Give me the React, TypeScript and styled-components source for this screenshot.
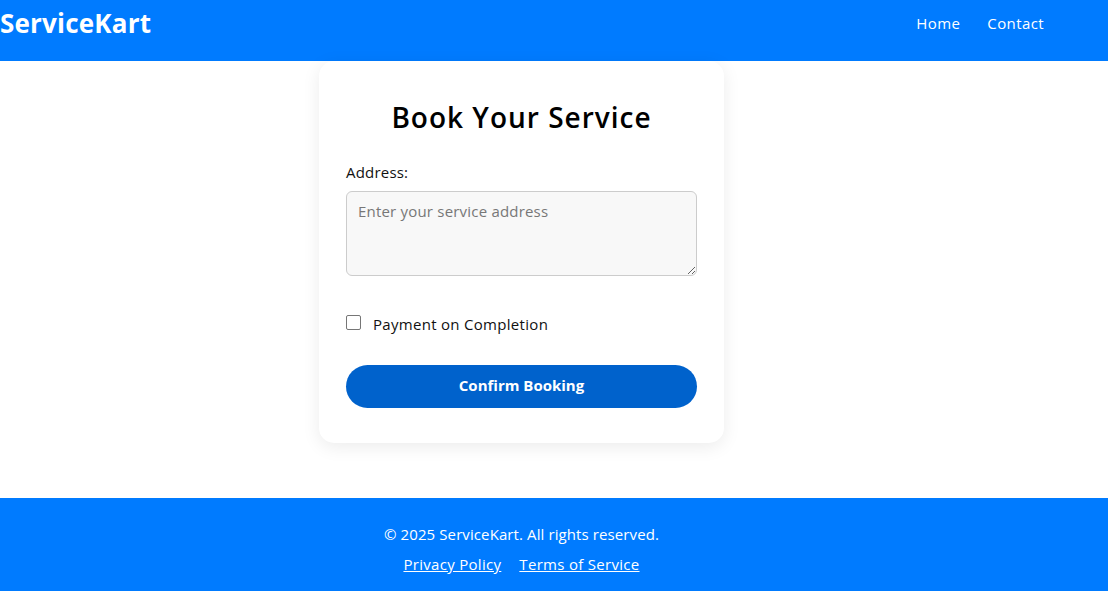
import React from "react";
import styled, { createGlobalStyle } from "styled-components";

const Global = createGlobalStyle`
  * { box-sizing: border-box; }
  body {
    margin: 0;
    font-family: "Open Sans", "Noto Sans", sans-serif;
    background: #ffffff;
    color: #111;
  }
`;

const Page = styled.div`
  display: flex;
  flex-direction: column;
  min-height: 591px;
`;

const Header = styled.header`
  height: 61px;
  background: #007bff;
  display: flex;
  align-items: flex-start;
  justify-content: space-between;
  padding: 0 64px 0 0;
`;

const Brand = styled.div`
  color: #fff;
  font-size: 26px;
  font-weight: 700;
  line-height: 30px;
  margin-top: 8px;
  letter-spacing: 0.2px;
`;

const Nav = styled.nav`
  display: flex;
  gap: 27px;
  margin-top: 12px;
`;

const NavLink = styled.a`
  color: #fff;
  font-size: 15px;
  line-height: 22px;
  text-decoration: none;
  letter-spacing: 0.4px;
`;

const Main = styled.main`
  height: 437px;
  display: flex;
  justify-content: center;
  padding-right: 65px;
`;

const Card = styled.section`
  width: 405px;
  height: 382px;
  background: #fff;
  border-radius: 15px;
  box-shadow: 0 4px 18px rgba(0, 0, 0, 0.08);
  padding: 39px 27px 35px;
  display: flex;
  flex-direction: column;
`;

const Title = styled.h2`
  margin: 0 0 27px;
  text-align: center;
  font-size: 28px;
  line-height: 34px;
  font-weight: 600;
  letter-spacing: 1px;
  color: #000;
`;

const Label = styled.label`
  font-size: 15px;
  line-height: 22px;
  color: #111;
  margin-bottom: 8px;
  letter-spacing: 0.2px;
`;

const Area = styled.textarea`
  width: 351px;
  height: 85px;
  border: 1px solid #ccc;
  border-radius: 6px;
  background: #f8f8f8;
  padding: 9px 11px;
  font-family: inherit;
  font-size: 15px;
  line-height: 20px;
  letter-spacing: 0.2px;
  resize: vertical;
  &::placeholder { color: #777; }
`;

const CheckRow = styled.label`
  display: flex;
  align-items: center;
  gap: 12px;
  margin-top: 37px;
  height: 22px;
  font-size: 15px;
  letter-spacing: 0.3px;
  color: #111;
`;

const Check = styled.input`
  width: 15px;
  height: 15px;
  margin: -3px 0 0 0;
  appearance: none;
  border: 1px solid #767676;
  border-radius: 2px;
  background: #fff;
`;

const Button = styled.button`
  margin-top: 30px;
  width: 351px;
  height: 43px;
  border: none;
  border-radius: 22px;
  background: #0062cc;
  color: #fff;
  font-family: inherit;
  font-size: 15px;
  font-weight: 700;
  padding: 0 0 3px;
`;

const Footer = styled.footer`
  height: 93px;
  background: #007bff;
  color: #fff;
  display: flex;
  flex-direction: column;
  align-items: center;
  padding-top: 25px;
  padding-right: 65px;
`;

const Copy = styled.p`
  margin: 0;
  font-size: 15px;
  line-height: 22px;
  letter-spacing: 0.1px;
`;

const Links = styled.div`
  display: flex;
  gap: 18px;
  margin-top: 8px;
`;

const FootLink = styled.a`
  color: #fff;
  font-size: 15px;
  line-height: 22px;
  letter-spacing: 0.3px;
  text-decoration: underline;
`;

export default function App() {
  return (
    <Page>
      <Global />
      <Header>
        <Brand>ServiceKart</Brand>
        <Nav>
          <NavLink href="#">Home</NavLink>
          <NavLink href="#">Contact</NavLink>
        </Nav>
      </Header>
      <Main>
        <Card>
          <Title>Book Your Service</Title>
          <Label htmlFor="addr">Address:</Label>
          <Area id="addr" placeholder="Enter your service address" />
          <CheckRow>
            <Check type="checkbox" />
            Payment on Completion
          </CheckRow>
          <Button>Confirm Booking</Button>
        </Card>
      </Main>
      <Footer>
        <Copy>© 2025 ServiceKart. All rights reserved.</Copy>
        <Links>
          <FootLink href="#">Privacy Policy</FootLink>
          <FootLink href="#">Terms of Service</FootLink>
        </Links>
      </Footer>
    </Page>
  );
}
